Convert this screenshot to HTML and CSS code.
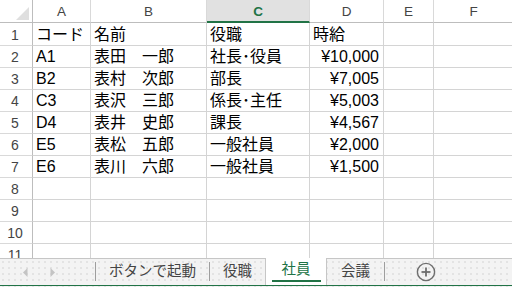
FILE: index.html
```html
<!DOCTYPE html>
<html lang="ja">
<head>
<meta charset="utf-8">
<title>社員</title>
<link rel="stylesheet" href="styles.css">
</head>
<body>
<div class="app">
  <div class="grid-wrap">
    <div class="sheet">
      <div class="corner"><span class="tri"></span></div>
      <div class="colh">A</div>
      <div class="colh">B</div>
      <div class="colh sel">C</div>
      <div class="colh">D</div>
      <div class="colh">E</div>
      <div class="colh">F</div>

      <div class="rowh">1</div>
      <div class="cell">コード</div><div class="cell">名前</div><div class="cell">役職</div><div class="cell">時給</div><div class="cell"></div><div class="cell"></div>

      <div class="rowh">2</div>
      <div class="cell">A1</div><div class="cell">表田　一郎</div><div class="cell">社長･役員</div><div class="cell num">¥10,000</div><div class="cell"></div><div class="cell"></div>

      <div class="rowh">3</div>
      <div class="cell">B2</div><div class="cell">表村　次郎</div><div class="cell">部長</div><div class="cell num">¥7,005</div><div class="cell"></div><div class="cell"></div>

      <div class="rowh">4</div>
      <div class="cell">C3</div><div class="cell">表沢　三郎</div><div class="cell">係長･主任</div><div class="cell num">¥5,003</div><div class="cell"></div><div class="cell"></div>

      <div class="rowh">5</div>
      <div class="cell">D4</div><div class="cell">表井　史郎</div><div class="cell">課長</div><div class="cell num">¥4,567</div><div class="cell"></div><div class="cell"></div>

      <div class="rowh">6</div>
      <div class="cell">E5</div><div class="cell">表松　五郎</div><div class="cell">一般社員</div><div class="cell num">¥2,000</div><div class="cell"></div><div class="cell"></div>

      <div class="rowh">7</div>
      <div class="cell">E6</div><div class="cell">表川　六郎</div><div class="cell">一般社員</div><div class="cell num">¥1,500</div><div class="cell"></div><div class="cell"></div>

      <div class="rowh">8</div>
      <div class="cell"></div><div class="cell"></div><div class="cell"></div><div class="cell"></div><div class="cell"></div><div class="cell"></div>

      <div class="rowh">9</div>
      <div class="cell"></div><div class="cell"></div><div class="cell"></div><div class="cell"></div><div class="cell"></div><div class="cell"></div>

      <div class="rowh">10</div>
      <div class="cell"></div><div class="cell"></div><div class="cell"></div><div class="cell"></div><div class="cell"></div><div class="cell"></div>

      <div class="rowh">11</div>
      <div class="cell"></div><div class="cell"></div><div class="cell"></div><div class="cell"></div><div class="cell"></div><div class="cell"></div>
    </div>
  </div>

  <div class="tabbar">
    <div class="tabs">
      <div class="nav">
        <svg width="95" height="26" viewBox="0 0 95 26">
          <polygon points="27.5,9 27.5,18 23,13.5" fill="#c4c4c4"/>
          <polygon points="50.5,9 50.5,18 55,13.5" fill="#c4c4c4"/>
        </svg>
      </div>
      <div class="sep"></div>
      <div class="tab t1">ボタンで起動</div>
      <div class="sep"></div>
      <div class="tab t2">役職</div>
      <div class="tab active"><span class="lbl">社員</span></div>
      <div class="tab t4">会議</div>
      <div class="sep"></div>
      <div class="add">
        <svg width="20" height="20" viewBox="0 0 20 20">
          <circle cx="10" cy="10" r="8.6" fill="none" stroke="#6e6e6e" stroke-width="1.4"/>
          <line x1="10" y1="5.5" x2="10" y2="14.5" stroke="#6e6e6e" stroke-width="1.8"/>
          <line x1="5.5" y1="10" x2="14.5" y2="10" stroke="#6e6e6e" stroke-width="1.8"/>
        </svg>
      </div>
    </div>
    <div class="status-line"></div>
  </div>
</div>
</body>
</html>
```

FILE: styles.css
```css
* { box-sizing: border-box; }

html, body {
  margin: 0;
  padding: 0;
  background: #ffffff;
}

body {
  width: 512px;
  height: 287px;
  overflow: hidden;
  font-family: "Liberation Sans", "Noto Sans CJK JP", sans-serif;
}

.app {
  display: flex;
  flex-direction: column;
  width: 512px;
  height: 287px;
}

.grid-wrap {
  height: 258px;
  overflow: hidden;
  flex: none;
}

.sheet {
  display: grid;
  grid-template-columns: 33px 58px 116px 103px 74px 50px 80px;
  grid-template-rows: 23px 23px repeat(10, 22px);
  width: 514px;
}

.corner {
  border-right: 1px solid #bdbdbd;
  border-bottom: 1px solid #bdbdbd;
  display: flex;
  align-items: flex-end;
  justify-content: flex-end;
  padding: 0 3px 2px 0;
}

.tri {
  display: block;
  width: 13px;
  height: 13px;
  background: #dfdfdf;
  clip-path: polygon(100% 0, 100% 100%, 0 100%);
}

.colh {
  border-right: 1px solid #d9d9d9;
  border-bottom: 1px solid #bdbdbd;
  display: flex;
  align-items: center;
  justify-content: center;
  font-family: "Liberation Sans", sans-serif;
  font-size: 13.5px;
  color: #444444;
  padding-top: 1px;
}

.colh.sel {
  background: #e1e1e1;
  border-bottom: 2px solid #217346;
  color: #217346;
  font-weight: bold;
}

.rowh {
  border-right: 1px solid #bdbdbd;
  border-bottom: 1px solid #d9d9d9;
  display: flex;
  align-items: flex-end;
  justify-content: center;
  font-family: "Liberation Sans", sans-serif;
  font-size: 14px;
  line-height: 14px;
  color: #444444;
  padding: 0 2px 3px 0;
}

.cell {
  border-right: 1px solid #d4d4d4;
  border-bottom: 1px solid #d4d4d4;
  display: flex;
  align-items: flex-end;
  padding: 0 4px 1px 3px;
  font-family: "Liberation Sans", "Noto Sans CJK JP", sans-serif;
  font-size: 16px;
  line-height: 18px;
  color: #000000;
  white-space: nowrap;
  overflow: visible;
}

.cell.num {
  justify-content: flex-end;
}

/* tab bar */
.tabbar {
  height: 29px;
  flex: none;
  display: flex;
  flex-direction: column;
  background-color: #f3f3f3;
  background-image: radial-gradient(circle, #dadada 0.6px, transparent 0.9px);
  background-size: 6px 6px;
  border-top: 1px solid #c6c6c6;
}

.tabs {
  height: 26px;
  display: flex;
  align-items: stretch;
}

.nav {
  width: 95px;
  flex: none;
}

.nav svg { display: block; }

.sep {
  width: 1px;
  flex: none;
  background: #9e9e9e;
  margin: 3px 0 4px 0;
}

.tab {
  display: flex;
  align-items: center;
  justify-content: center;
  font-family: "Noto Sans CJK JP", sans-serif;
  font-size: 14.5px;
  color: #444444;
  padding-bottom: 6px;
  flex: none;
}

.t1 { width: 113px; }
.t2 { width: 55px; }
.t4 { width: 57px; }

.tab.active {
  width: 62px;
  background: #ffffff;
  border-left: 1px solid #c6c6c6;
  border-right: 1px solid #c6c6c6;
  margin-top: -1px;
  padding: 0;
  align-items: stretch;
}

.tab.active .lbl {
  display: flex;
  align-items: center;
  padding: 0 10px 4px 10px;
  margin-bottom: 3px;
  border-bottom: 2px solid #217346;
  color: #217346;
}

.add {
  flex: none;
  margin-left: 31px;
  padding-top: 3px;
}

.add svg { display: block; }

.status-line {
  height: 1px;
  background: #217346;
  margin-top: 0;
}
```
